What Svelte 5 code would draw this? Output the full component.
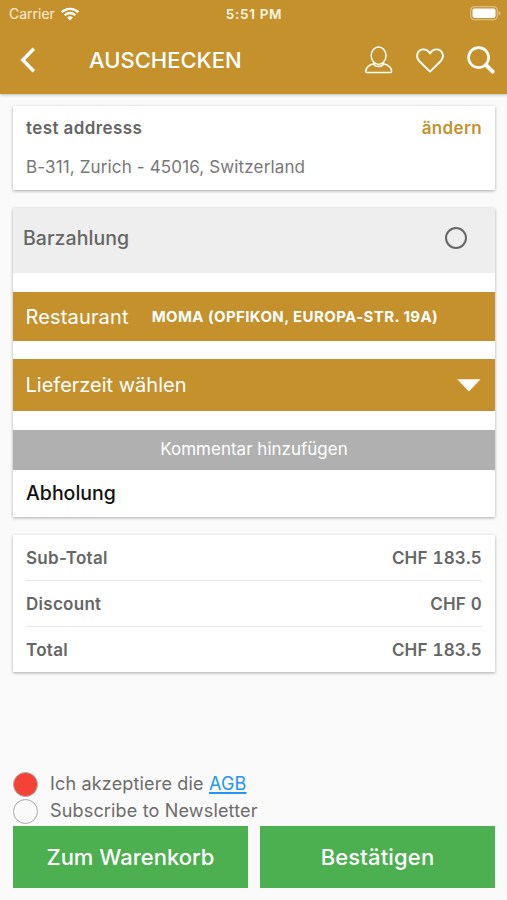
<script lang="ts">
  type Line = {
    label: string;
    amount: string;
  };

  const lines: Line[] = [
    { label: 'Sub-Total', amount: 'CHF 183.5' },
    { label: 'Discount', amount: 'CHF 0' },
    { label: 'Total', amount: 'CHF 183.5' },
  ];

  let cash = $state(false);
  let terms = $state(true);
  let newsletter = $state(false);
</script>

<div class="screen">
  <header>
    <div class="status">
      <div class="carrier">
        <span>Carrier</span>
        <svg width="18" height="14" viewBox="0 0 18 14" fill="none" stroke="#fff" stroke-width="2.3">
          <path d="M0.8 5.2 A11.6 11.6 0 0 1 17.2 5.2" />
          <path d="M3.7 8.2 A7.5 7.5 0 0 1 14.3 8.2" />
          <path d="M9 13.6 L6.2 10.6 A4 4 0 0 1 11.8 10.6 Z" fill="#fff" stroke="none" />
        </svg>
      </div>
      <span class="time">5:51 PM</span>
      <div class="power">
        <svg width="31" height="15" viewBox="0 0 31 15">
          <rect x="0.7" y="0.7" width="26.6" height="13" rx="3.6" fill="none" stroke="#fff" stroke-opacity="0.4" stroke-width="1.3" />
          <rect x="2.5" y="2.5" width="23" height="9.4" rx="1.8" fill="#fff" />
          <path d="M28.6 5 Q30.4 5.8 30.4 7.2 Q30.4 8.6 28.6 9.4 Z" fill="#fff" fill-opacity="0.5" />
        </svg>
      </div>
    </div>
    <div class="bar">
      <button class="icon back" aria-label="back">
        <svg width="16" height="26" viewBox="0 0 16 26" fill="none" stroke="#fff" stroke-width="3.4">
          <path d="M13.8 1.8 L2.8 13 L13.8 24.2" />
        </svg>
      </button>
      <h1>AUSCHECKEN</h1>
      <nav>
        <button class="icon" aria-label="account">
          <svg width="28" height="28" viewBox="0 0 28 28" fill="none" stroke="#fff" stroke-width="1.5">
            <ellipse cx="13.6" cy="9.7" rx="7.4" ry="8.7" />
            <path d="M8.8 17.8 C4.6 18.8 0.8 20.6 0.8 25.6 Q0.8 26.6 1.8 26.6 H25.6 Q26.6 26.6 26.6 25.6 C26.6 20.6 22.6 18.8 18.4 17.8 C17.1 21.4 10.1 21.4 8.8 17.8 Z" />
          </svg>
        </button>
        <button class="icon" aria-label="favourites">
          <svg width="28" height="25" viewBox="0 0 28 25" fill="none" stroke="#fff" stroke-width="1.9" stroke-linejoin="round">
            <path d="M14 23.6 L3.2 13 C-0.6 9 1 1.4 7.6 1.4 C11 1.4 13 3.8 14 5.4 C15 3.8 17 1.4 20.4 1.4 C27 1.4 28.6 9 24.8 13 Z" />
          </svg>
        </button>
        <button class="icon" aria-label="search">
          <svg width="28" height="28" viewBox="0 0 28 28" fill="none" stroke="#fff">
            <circle cx="11.6" cy="11.6" r="10" stroke-width="2.6" />
            <path d="M18.8 18.8 L25.6 25.6" stroke-width="4" stroke-linecap="round" />
          </svg>
        </button>
      </nav>
    </div>
  </header>

  <main>
    <section class="card address">
      <div class="address-head">
        <span class="name">test addresss</span>
        <button class="change">ändern</button>
      </div>
      <p>B-311, Zurich - 45016, Switzerland</p>
    </section>

    <section class="card options">
      <button class="payment" onclick={() => (cash = !cash)}>
        <span>Barzahlung</span>
        <i class="radio" class:on={cash}></i>
      </button>
      <div class="gold restaurant">
        <span class="restaurant-label">Restaurant</span>
        <span class="restaurant-name">MOMA (OPFIKON, EUROPA-STR. 19A)</span>
      </div>
      <button class="gold delivery">
        <span>Lieferzeit wählen</span>
        <svg width="24" height="13" viewBox="0 0 24 13">
          <path d="M0.3 0.3 H23.5 L11.9 12.6 Z" fill="#fff" />
        </svg>
      </button>
      <button class="comment"><span>Kommentar hinzufügen</span></button>
      <div class="pickup"><span>Abholung</span></div>
    </section>

    <section class="card totals">
      {#each lines as line}
        <div class="line">
          <span class="line-label">{line.label}</span>
          <span class="amount">{line.amount}</span>
        </div>
      {/each}
    </section>
  </main>

  <footer>
    <div class="check">
      <button class="dot" class:checked={terms} aria-label="AGB" onclick={() => (terms = !terms)}></button>
      <span class="terms">Ich akzeptiere die <a href="#agb">AGB</a></span>
    </div>
    <div class="check">
      <button class="dot" class:checked={newsletter} aria-label="Newsletter" onclick={() => (newsletter = !newsletter)}></button>
      <span class="news">Subscribe to Newsletter</span>
    </div>
    <div class="actions">
      <button><span class="cart">Zum Warenkorb</span></button>
      <button><span class="confirm">Bestätigen</span></button>
    </div>
  </footer>
</div>

<style>
  :global(body) {
    background: #fafafa;
  }
  .screen {
    display: flex;
    flex-direction: column;
    height: 900px;
    box-sizing: border-box;
    font-family: Inter, "Liberation Sans", sans-serif;
    color: #666;
    background: #fafafa;
  }
  button {
    display: flex;
    align-items: center;
    margin: 0;
    padding: 0;
    border: none;
    border-radius: 0;
    background: none;
    font-family: inherit;
    color: inherit;
    cursor: pointer;
  }
  span {
    white-space: nowrap;
  }
  svg {
    display: block;
  }

  header {
    height: 94px;
    flex: none;
    background: #c5912d;
    color: #fff;
    box-shadow: 0 1px 3px rgba(0, 0, 0, 0.25);
  }
  .status {
    display: grid;
    grid-template-columns: 1fr auto 1fr;
    align-items: center;
    height: 27px;
    padding: 0 6px 0 9px;
    font-size: 14px;
  }
  .carrier {
    display: flex;
    align-items: center;
    gap: 6px;
    color: #fbeed5;
  }
  .time {
    margin-right: 2px;
    font-size: 13.5px;
    font-weight: 600;
    letter-spacing: 0.7px;
    color: #fff6e4;
  }
  .power {
    display: flex;
    justify-content: flex-end;
  }
  .bar {
    display: flex;
    align-items: center;
    height: 66px;
    padding: 0 12px 0 20px;
  }
  h1 {
    flex: 1;
    margin: 0 0 0 53px;
    font-size: 22px;
    font-weight: 500;
  }
  nav {
    display: flex;
    align-items: center;
    gap: 23px;
  }

  main {
    display: flex;
    flex-direction: column;
    gap: 18px;
    padding: 12px 12px 0 13px;
  }
  .card {
    background: #fff;
    box-shadow: 0 1px 3px rgba(0, 0, 0, 0.32);
  }
  .address {
    height: 84px;
    padding: 0 13px;
    box-sizing: border-box;
  }
  .address-head {
    display: flex;
    justify-content: space-between;
    padding-top: 11px;
    font-size: 17px;
    font-weight: 600;
    line-height: 22px;
    letter-spacing: 0.4px;
  }
  .change {
    color: #c5912d;
    font-size: 17px;
    font-weight: 600;
    letter-spacing: 0.35px;
  }
  .address p {
    margin: 17px 0 0;
    color: #777;
    font-size: 17px;
    line-height: 22px;
    letter-spacing: 0.14px;
  }

  .options {
    height: 309px;
  }
  .payment {
    justify-content: space-between;
    width: 100%;
    height: 65px;
    padding: 0 28px 6px 10px;
    background: #eee;
    font-size: 19.5px;
    font-weight: 500;
    letter-spacing: 0.05px;
  }
  .radio {
    width: 18px;
    height: 18px;
    border: 2px solid #666;
    border-radius: 50%;
  }
  .radio.on {
    background: #c5912d;
  }
  .gold {
    display: flex;
    align-items: center;
    box-sizing: border-box;
    width: 100%;
    margin-top: 18px;
    padding: 0 14px 0 12.5px;
    background: #c5912d;
    color: #fff;
    font-size: 20px;
  }
  .restaurant {
    height: 49px;
    margin-top: 19px;
  }
  .restaurant-label {
    letter-spacing: 0.15px;
  }
  .restaurant-name {
    margin-left: 23px;
    font-size: 15px;
    font-weight: 700;
    letter-spacing: 0.4px;
  }
  .delivery {
    justify-content: space-between;
    height: 52px;
  }
  .delivery svg {
    margin-top: 1px;
  }
  .comment {
    justify-content: center;
    width: 100%;
    height: 40px;
    margin-top: 19px;
    padding-bottom: 3px;
    background: #b0b0b0;
    color: #fff;
    font-size: 17px;
  }
  .pickup {
    display: flex;
    align-items: center;
    height: 46px;
    padding-left: 13px;
    color: #111;
    font-size: 19.5px;
    font-weight: 500;
  }

  .totals {
    padding: 0 13px;
    height: 137px;
  }
  .line {
    display: flex;
    align-items: center;
    justify-content: space-between;
    box-sizing: border-box;
    height: 46px;
    border-bottom: 1px solid #e9e9e9;
    font-size: 17px;
    font-weight: 600;
    letter-spacing: 0.28px;
  }
  .line:last-child {
    border-bottom: none;
  }
  .amount {
    font-variant-numeric: tabular-nums;
    letter-spacing: 0.2px;
  }

  footer {
    display: flex;
    flex-direction: column;
    margin-top: auto;
    padding: 0 12px 12px 13px;
  }
  .check {
    display: flex;
    align-items: center;
    gap: 12px;
    height: 27px;
    font-size: 18px;
    color: #6c6c6c;
  }
  .check span {
    padding-bottom: 2px;
    letter-spacing: 0.17px;
  }
  .dot {
    width: 25px;
    height: 25px;
    border: 1px solid #aaa;
    border-radius: 50%;
  }
  .checked {
    background: #f44336;
  }
  .check a {
    color: #2196f3;
    text-underline-offset: 2px;
    text-decoration-thickness: 1.5px;
  }
  .actions {
    display: flex;
    gap: 12px;
    margin-top: 1px;
  }
  .actions button {
    flex: 1;
    justify-content: center;
    height: 62px;
    background: #4caf50;
    color: #fff;
    font-size: 22px;
    font-weight: 500;
  }
  .confirm {
    letter-spacing: 0.15px;
  }
</style>
